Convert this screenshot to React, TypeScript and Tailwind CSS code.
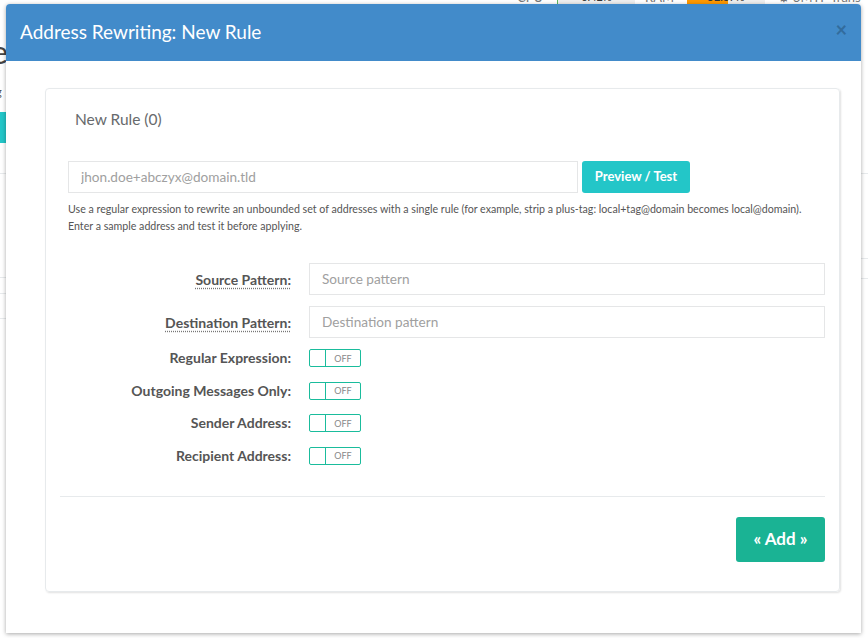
import React from 'react'

const font = { fontFamily: 'Lato, "Open Sans", sans-serif' }

function Toggle() {
  return (
    <div className="flex h-[18px] w-[52px] items-stretch rounded-[2px] border border-[#1abc9c] bg-white">
      <span className="w-[16px] border-r border-[#1abc9c]" />
      <span className="flex flex-1 items-center justify-center text-[9px] leading-none text-[#888]">OFF</span>
    </div>
  )
}

const toggles = ['Regular Expression:', 'Outgoing Messages Only:', 'Sender Address:', 'Recipient Address:']

export default function App() {
  return (
    <div className="relative h-[638px] w-[868px] overflow-hidden bg-white" style={font}>
      {/* page behind the modal */}
      <div className="absolute inset-0">
        <div className="absolute left-[517px] top-[-10px] flex h-[14px] items-center text-[13px] leading-[14px] text-[#777]">
          <span className="w-[40px]">CPU</span>
          <span className="flex h-[14px] w-[78px] items-center justify-center border-l border-[#5cb85c] bg-[#eee] text-[11px] text-[#333]">0.42%</span>
          <span className="ml-[10px] w-[42px]">RAM</span>
          <span className="relative flex h-[14px] w-[78px] items-center justify-center bg-[#eee] text-[11px] text-[#333]">
            <span className="absolute inset-y-0 left-0 w-[52%] bg-[#f90]" />
            <span className="relative">52.37%</span>
          </span>
          <span className="ml-[13px]">⚙ SMTP Trans</span>
        </div>
        <div className="absolute left-[-9px] top-[36px] text-[32px] leading-none text-[#444]">e</div>
        <div className="absolute left-[-4px] top-[84px] text-[11px] text-[#555]">g</div>
        <div className="absolute left-0 top-[112px] h-[31px] w-[10px] bg-[#23c6c8]" />
        <div className="absolute left-0 top-[173px] h-px w-full bg-[#e7eaec]" />
        <div className="absolute left-0 top-[277px] h-px w-[20px] bg-[#e7eaec]" />
        <div className="absolute left-0 top-[293px] h-px w-[20px] bg-[#e7eaec]" />
        <div className="absolute left-0 top-[318px] h-px w-[20px] bg-[#e7eaec]" />
        <div className="absolute right-0 top-[258px] h-px w-[20px] bg-[#e7eaec]" />
        <div className="absolute right-0 top-[278px] h-px w-[20px] bg-[#e7eaec]" />
      </div>

      {/* modal */}
      <div className="absolute left-[6px] top-[4px] flex h-[629px] w-[855px] flex-col rounded-t-[4px] bg-white shadow-[0_1px_4px_rgba(0,0,0,0.35)]">
        <div className="flex h-[57px] items-center justify-between rounded-t-[4px] bg-[#428bca] pl-[14px] pr-[14px]">
          <h4 className="text-[19px] text-white">Address Rewriting: New Rule</h4>
          <button className="mb-[8px] text-[20px] font-bold leading-none text-[#2c5f8a] opacity-70">×</button>
        </div>

        <div className="pl-[39px] pr-[21px] pt-[27px]">
          <div className="flex h-[504px] flex-col rounded-[4px] border border-[#e7eaec] px-[14px] shadow-[1px_1px_2px_rgba(0,0,0,0.12)]">
            <div className="pl-[15px] pt-[18px] text-[15.5px] leading-[24px] text-[#676a6c]">New Rule (0)</div>

            <div className="mt-[30px] pl-[8px]">
              <div className="flex gap-[4px]">
                <input
                  className="h-[32px] w-[510px] border border-[#e5e6e7] px-[12px] text-[13.6px] text-[#555] placeholder:text-[#a0a0a0] outline-none"
                  placeholder="jhon.doe+abczyx@domain.tld"
                  style={font}
                />
                <button className="h-[32px] w-[108px] rounded-[3px] bg-[#23c6c8] text-[13px] font-bold text-white">Preview / Test</button>
              </div>
              <p className="mt-[7px] text-[10.65px] leading-[17px] text-[#555]">
                Use a regular expression to rewrite an unbounded set of addresses with a single rule (for example, strip a plus-tag: local+tag@domain becomes local@domain).
                <br />
                Enter a sample address and test it before applying.
              </p>
            </div>

            <div className="mt-[29px] flex flex-col">
              {['Source Pattern:', 'Destination Pattern:'].map((l, i) => (
                <div key={l} className={`flex items-center ${i ? 'mt-[11px]' : ''}`}>
                  <label className="w-[231px] text-right text-[14px] font-bold text-[#555]">
                    <span className="underline decoration-dotted decoration-[#777] underline-offset-[3px]">{l}</span>
                  </label>
                  <input
                    className="ml-[18px] h-[32px] flex-1 border border-[#e5e6e7] px-[12px] text-[13.6px] placeholder:text-[#a0a0a0] outline-none"
                    placeholder={l === 'Source Pattern:' ? 'Source pattern' : 'Destination pattern'}
                    style={font}
                  />
                </div>
              ))}
              <div className="mt-[11px] flex flex-col gap-[14.5px]">
                {toggles.map((l) => (
                  <div key={l} className="flex items-center">
                    <label className="w-[231px] text-right text-[14px] font-bold leading-[18px] text-[#555]">{l}</label>
                    <div className="ml-[18px]">
                      <Toggle />
                    </div>
                  </div>
                ))}
              </div>
            </div>

            <div className="mt-[31px] h-px bg-[#e7eaec]" />

            <div className="flex justify-end pt-[20px]">
              <button className="h-[45px] w-[89px] rounded-[3px] bg-[#1ab394] text-[17px] font-bold text-white">« Add »</button>
            </div>
          </div>
        </div>
      </div>
    </div>
  )
}
